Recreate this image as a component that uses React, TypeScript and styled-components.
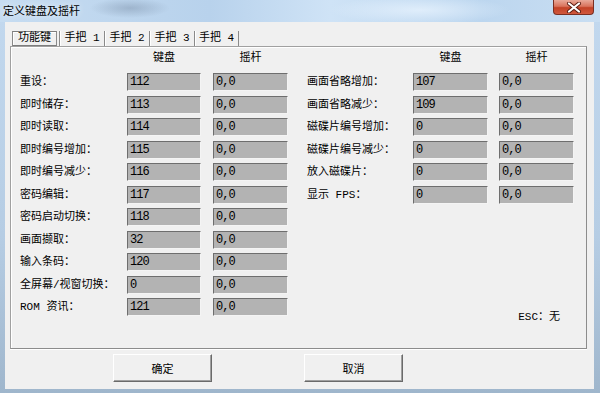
import React from "react";
import styled, { createGlobalStyle } from "styled-components";

const GlobalStyle = createGlobalStyle`
  html, body {
    margin: 0;
    padding: 0;
    background: #ffffff;
  }
  body {
    font-family: "Liberation Mono", "Noto Sans CJK SC", monospace;
    font-size: 11px;
    color: #000;
  }
`;

type Binding = { label: string; key: string; pad: string };

const leftRows: Binding[] = [
  { label: "重设：", key: "112", pad: "0,0" },
  { label: "即时储存：", key: "113", pad: "0,0" },
  { label: "即时读取：", key: "114", pad: "0,0" },
  { label: "即时编号增加：", key: "115", pad: "0,0" },
  { label: "即时编号减少：", key: "116", pad: "0,0" },
  { label: "密码编辑：", key: "117", pad: "0,0" },
  { label: "密码启动切换：", key: "118", pad: "0,0" },
  { label: "画面撷取：", key: "32", pad: "0,0" },
  { label: "输入条码：", key: "120", pad: "0,0" },
  { label: "全屏幕/视窗切换：", key: "0", pad: "0,0" },
  { label: "ROM 资讯：", key: "121", pad: "0,0" },
];

const rightRows: Binding[] = [
  { label: "画面省略增加：", key: "107", pad: "0,0" },
  { label: "画面省略减少：", key: "109", pad: "0,0" },
  { label: "磁碟片编号增加：", key: "0", pad: "0,0" },
  { label: "磁碟片编号减少：", key: "0", pad: "0,0" },
  { label: "放入磁碟片：", key: "0", pad: "0,0" },
  { label: "显示 FPS：", key: "0", pad: "0,0" },
];

const tabs = ["功能键", "手把 1", "手把 2", "手把 3", "手把 4"];

const Window = styled.div`
  width: 600px;
  height: 393px;
  display: flex;
  flex-direction: column;
  background: linear-gradient(180deg, #c3d9ef 0%, #b6cde4 60%, #9fb6cc 100%);
  overflow: hidden;
`;

const TitleBar = styled.div`
  height: 22px;
  display: flex;
  align-items: flex-start;
  justify-content: space-between;
  padding-left: 3px;
  background:
    radial-gradient(ellipse 40px 10px at 130px 8px, rgba(120, 140, 165, 0.45), transparent),
    radial-gradient(ellipse 90px 14px at 420px 10px, rgba(235, 245, 255, 0.7), transparent),
    linear-gradient(90deg, #c6dcf1 0%, #b8d2ec 35%, #cfe3f6 55%, #bcd6ef 80%, #c9def2 100%);
`;

const Title = styled.span`
  line-height: 20px;
  font-family: "Noto Sans CJK SC", sans-serif;
  font-size: 11px;
  color: #000;
  text-shadow: 0 0 6px rgba(255, 255, 255, 0.9);
`;

const CloseButton = styled.div`
  width: 41px;
  height: 15px;
  margin-right: 6px;
  box-sizing: border-box;
  border: 1px solid #7a2f22;
  border-top: none;
  border-radius: 0 0 4px 4px;
  background: linear-gradient(180deg, #e9a999 0%, #d9735c 45%, #c34226 55%, #d0583d 100%);
  display: flex;
  align-items: center;
  justify-content: center;
`;

const Client = styled.div`
  flex: 1;
  margin: 0 6px 4px 5px;
  background: #f0f0f0;
  display: flex;
  flex-direction: column;
`;

const TabStrip = styled.div`
  display: flex;
  height: 15px;
  margin: 9px 0 0 7px;
`;

const Tab = styled.div<{ $active?: boolean; $last?: boolean }>`
  box-sizing: border-box;
  width: 45px;
  height: 15px;
  margin-right: ${(p) => (p.$active ? "2px" : "0")};
  display: flex;
  align-items: center;
  justify-content: center;
  line-height: 13px;
  white-space: pre;
  border: ${(p) => (p.$active ? "1px solid #7d7d7d" : "none")};
  border-left: 1px solid #8a8a8a;
  border-right: ${(p) => (p.$active || p.$last ? "1px solid #8a8a8a" : "none")};
  box-shadow: ${(p) => (p.$active ? "inset 1px 1px 0 #ffffff" : "inset 1px 0 0 #ffffff")};
`;

const Panel = styled.div`
  height: 303px;
  box-sizing: border-box;
  margin: 0 7px 0 5px;
  padding: 4px 0 0 9px;
  display: flex;
  gap: 19px;
  border: 1px solid #a0a0a0;
  border-right-color: #8c8c8c;
  border-bottom-color: #8c8c8c;
  box-shadow: inset 1px 1px 0 #ffffff, 0 1px 0 #ffffff;
`;

const Group = styled.div`
  display: flex;
  flex-direction: column;
  gap: 4.5px;
`;

const Row = styled.div<{ $gap: number }>`
  display: grid;
  grid-template-columns: 95px ${(p) => (p.$gap === 12 ? 74 : 75)}px 75px;
  column-gap: ${(p) => p.$gap}px;
  align-items: center;
  height: 18px;
`;

const HeaderRow = styled(Row)`
  height: 14px;
  margin-bottom: 3.5px;
`;

const Heading = styled.span`
  text-align: center;
  line-height: 14px;
`;

const Label = styled.span`
  white-space: pre;
  line-height: 14px;
`;

const Field = styled.div`
  height: 18px;
  box-sizing: border-box;
  padding-left: 2px;
  background: #b3b3b3;
  border: 1px solid;
  border-color: #6e6e6e #f4f4f4 #f4f4f4 #6e6e6e;
  font-size: 12px;
  letter-spacing: -1px;
  line-height: 16px;
`;

const RightGroup = styled(Group)`
  width: 267px;
`;

const Esc = styled.span`
  margin-top: auto;
  align-self: flex-end;
  margin-right: 14px;
  margin-bottom: 24px;
  line-height: 14px;
  white-space: pre;
`;

const ButtonRow = styled.div`
  display: flex;
  gap: 92px;
  margin-top: 5px;
  padding-left: 108px;
`;

const Button = styled.div`
  width: 99px;
  height: 28px;
  box-sizing: border-box;
  display: flex;
  align-items: center;
  justify-content: center;
  background: #f0f0f0;
  border: 1px solid;
  border-color: #ffffff #6a6a6a #6a6a6a #ffffff;
  box-shadow: inset -1px -1px 0 #a0a0a0;
`;

function BindingRow({ row, gap }: { row: Binding; gap: number }) {
  return (
    <Row $gap={gap}>
      <Label>{row.label}</Label>
      <Field>{row.key}</Field>
      <Field>{row.pad}</Field>
    </Row>
  );
}

export default function App() {
  return (
    <>
      <GlobalStyle />
      <Window>
        <TitleBar>
          <Title>定义键盘及摇杆</Title>
          <CloseButton>
            <svg width="16" height="11" viewBox="0 0 16 11">
              <path d="M3 1.5 L13 9.5 M13 1.5 L3 9.5" stroke="#5a1c12" strokeWidth="4" strokeLinecap="round" />
              <path d="M3 1.5 L13 9.5 M13 1.5 L3 9.5" stroke="#ffffff" strokeWidth="2.2" strokeLinecap="round" />
            </svg>
          </CloseButton>
        </TitleBar>
        <Client>
          <TabStrip>
            {tabs.map((t, i) => (
              <Tab key={t} $active={i === 0} $last={i === tabs.length - 1}>
                {t}
              </Tab>
            ))}
          </TabStrip>
          <Panel>
            <Group>
              <HeaderRow $gap={12}>
                <span />
                <Heading>键盘</Heading>
                <Heading>摇杆</Heading>
              </HeaderRow>
              {leftRows.map((r) => (
                <BindingRow key={r.label} row={r} gap={12} />
              ))}
            </Group>
            <RightGroup>
              <HeaderRow $gap={11}>
                <span />
                <Heading>键盘</Heading>
                <Heading>摇杆</Heading>
              </HeaderRow>
              {rightRows.map((r) => (
                <BindingRow key={r.label} row={r} gap={11} />
              ))}
              <Esc>ESC：无</Esc>
            </RightGroup>
          </Panel>
          <ButtonRow>
            <Button>确定</Button>
            <Button>取消</Button>
          </ButtonRow>
        </Client>
      </Window>
    </>
  );
}
